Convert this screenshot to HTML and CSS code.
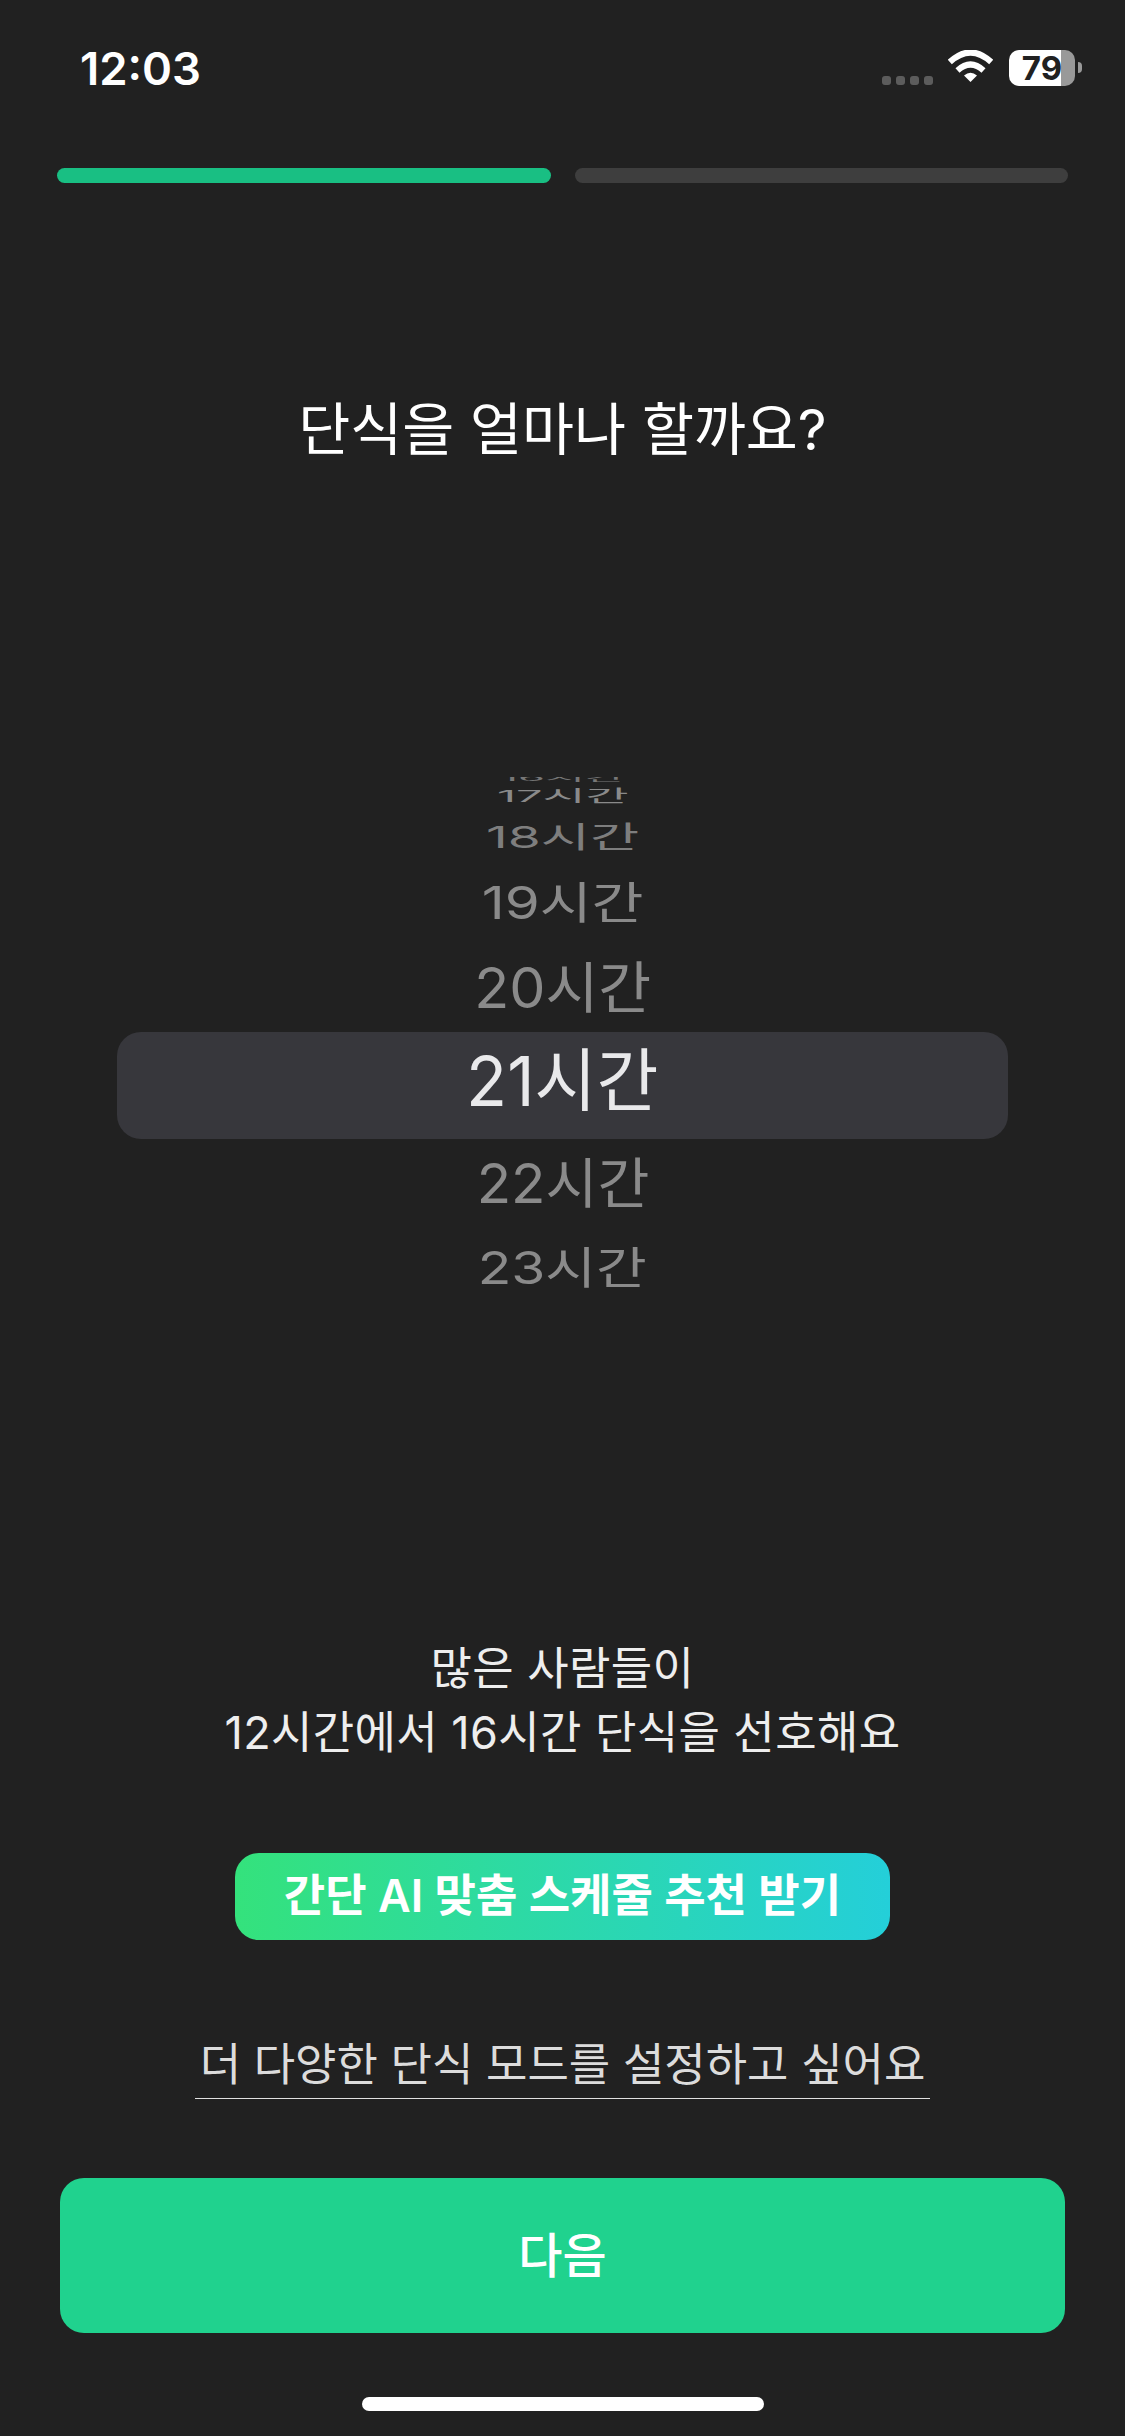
FILE: index.html
```html
<!DOCTYPE html>
<html lang="ko">
<head>
    <meta charset="UTF-8">
    <meta name="viewport" content="width=device-width, initial-scale=1.0">
    <title>단식 시간 선택</title>
    <link rel="stylesheet" href="styles.css">
</head>
<body>
    <header class="status-bar">
        <span class="time">12:03</span>
        <div class="status-icons">
            <div class="signal">
                <span class="dot"></span>
                <span class="dot"></span>
                <span class="dot"></span>
                <span class="dot"></span>
            </div>
            <svg class="wifi" width="45" height="32" viewBox="0 0 45 32">
                <path d="M1.8 12 Q22.5 -7 43.2 12" fill="none" stroke="#fff" stroke-width="6"/>
                <path d="M9.5 20.5 Q22.5 8.5 35.5 20.5" fill="none" stroke="#fff" stroke-width="6"/>
                <path d="M16 25.5 Q22.5 20 29 25.5 L22.5 32 Z" fill="#fff"/>
            </svg>
            <div class="battery">79</div>
        </div>
    </header>

    <div class="progress">
        <div class="progress-step done"></div>
        <div class="progress-step"></div>
    </div>

    <h1 class="title">단식을 얼마나 할까요?</h1>

    <div class="picker">
        <div class="picker-row row-16"><span>16시간</span></div>
        <div class="picker-row row-17"><span>17시간</span></div>
        <div class="picker-row row-18"><span>18시간</span></div>
        <div class="picker-row row-19"><span>19시간</span></div>
        <div class="picker-row row-20"><span>20시간</span></div>
        <div class="picker-row row-21"><span>21시간</span></div>
        <div class="picker-row row-22"><span>22시간</span></div>
        <div class="picker-row row-23"><span>23시간</span></div>
    </div>

    <p class="note">많은 사람들이<br>12시간에서 16시간 단식을 선호해요</p>

    <button class="ai-button">간단 AI 맞춤 스케줄 추천 받기</button>

    <a class="more-link">더 다양한 단식 모드를 설정하고 싶어요</a>

    <button class="next-button">다음</button>

    <div class="home-indicator"></div>
</body>
</html>
```

FILE: styles.css
```css
body {
    font-family: Inter, "Noto Sans CJK KR", sans-serif;
    background-color: #212121;
    margin: 0;
    width: 1125px;
    height: 2436px;
    overflow: hidden;
    display: flex;
    flex-direction: column;
    align-items: center;
    color: #fff;
}

button {
    font-family: inherit;
    border: none;
    color: #fff;
    padding: 0;
}

/* Status bar */
.status-bar {
    align-self: stretch;
    height: 168px;
    padding: 0 43px 32px 80px;
    box-sizing: border-box;
    display: flex;
    justify-content: space-between;
    align-items: center;
}

.time {
    font-size: 45.5px;
    font-weight: 600;
}

.status-icons {
    display: flex;
    align-items: center;
}

.signal {
    display: flex;
    gap: 5px;
    margin: 24px 15px 0 0;
}

.dot {
    width: 9px;
    height: 9px;
    border-radius: 3px;
    background-color: #5c5c5c;
}

.wifi {
    margin: -4px 16px 0 0;
}

.battery {
    position: relative;
    width: 66px;
    height: 36px;
    margin-right: 7px;
    border-radius: 10px;
    background: linear-gradient(90deg, #fff 79%, #999 79%);
    color: #212121;
    font-size: 33px;
    font-weight: 700;
    line-height: 36px;
    text-align: center;
}

.battery::after {
    content: "";
    position: absolute;
    left: 69px;
    top: 12px;
    width: 4px;
    height: 11px;
    border-radius: 0 6px 6px 0;
    background-color: #999;
}

/* Progress */
.progress {
    align-self: stretch;
    margin: 0 57px;
    display: flex;
    gap: 24px;
}

.progress-step {
    flex: 1;
    height: 15px;
    border-radius: 8px;
    background-color: #3e3e3e;
}

.progress-step.done {
    background-color: #19bf83;
}

.title {
    margin: 205px 0 0;
    font-size: 56.5px;
    font-weight: 400;
    line-height: 84px;
}

/* Picker */
.picker {
    align-self: stretch;
    margin-top: 305px;
    height: 532px;
    overflow: hidden;
}

.picker-row {
    display: flex;
    justify-content: center;
    align-items: center;
    box-sizing: border-box;
    font-size: 66px;
    color: #8a8a8a;
}

.picker-row span {
    display: inline-block;
    line-height: 1;
}

.row-16 { height: 1px; color: #777; }
.row-16 span { transform: scale(0.66, 0.14); }
.row-17 { height: 36px; }
.row-17 span { transform: scale(0.71, 0.25); }
.row-18 { height: 48px; padding-bottom: 2px; color: #7e7e7e; }
.row-18 span { transform: scale(0.81, 0.46); }
.row-19 { height: 82px; }
.row-19 span { transform: scale(0.855, 0.68); }
.row-20 { height: 88px; }
.row-20 span { transform: scale(0.87, 0.85); }

.row-21 {
    height: 107px;
    padding-bottom: 10px;
    margin: 0 117px;
    border-radius: 24px;
    background-color: #37373c;
    color: #e9e9eb;
}
.row-21 span { transform: scale(1.02, 1.05); }

.row-22 { height: 88px; }
.row-22 span { transform: scale(0.855, 0.83); }
.row-23 { height: 82px; }
.row-23 span { transform: scale(0.835, 0.68); }

.note {
    margin: 328px 0 0;
    font-size: 45px;
    line-height: 64px;
    letter-spacing: 0.4px;
    text-align: center;
    color: #eee;
}

.ai-button {
    margin-top: 88px;
    width: 655px;
    height: 87px;
    padding-bottom: 8px;
    border-radius: 24px;
    background: linear-gradient(90deg, #34e27c, #24cfd9);
    font-size: 45px;
    font-weight: 600;
}

.more-link {
    margin-top: 90px;
    width: 735px;
    height: 68px;
    border-bottom: 1.5px solid #e0e0e0;
    font-size: 45px;
    line-height: 70px;
    text-align: center;
    color: #dcdcdc;
}

.next-button {
    margin-top: 79px;
    width: 1005px;
    height: 155px;
    padding-bottom: 8px;
    border-radius: 24px;
    background-color: #20d28e;
    font-size: 48px;
    font-weight: 500;
}

.home-indicator {
    margin-top: 64px;
    width: 402px;
    height: 14px;
    border-radius: 7px;
    background-color: #fff;
}
```
